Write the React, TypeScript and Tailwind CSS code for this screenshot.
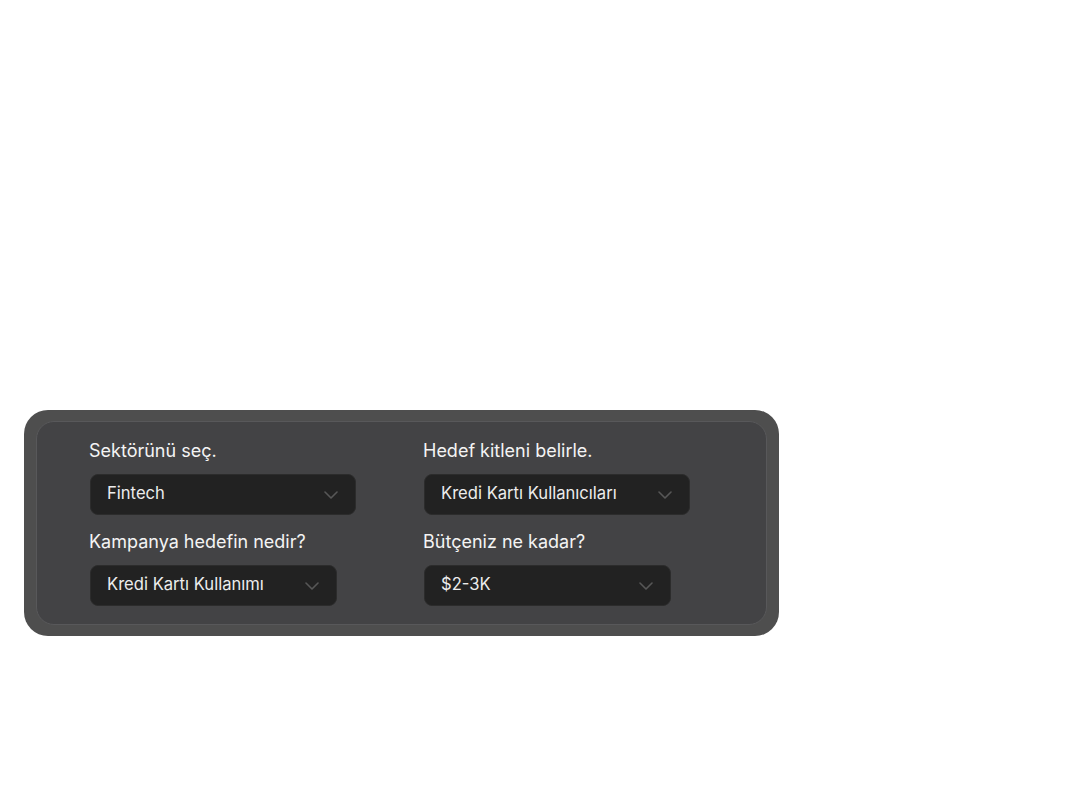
type Field = {
  label: string;
  value: string;
  width: string;
};

const fields: Field[] = [
  { label: 'Sektörünü seç.', value: 'Fintech', width: 'w-[266px]' },
  { label: 'Hedef kitleni belirle.', value: 'Kredi Kartı Kullanıcıları', width: 'w-[266px]' },
  { label: 'Kampanya hedefin nedir?', value: 'Kredi Kartı Kullanımı', width: 'w-[247px]' },
  { label: 'Bütçeniz ne kadar?', value: '$2-3K', width: 'w-[247px]' },
];

function Chevron() {
  return (
    <svg width="14" height="8" viewBox="0 0 14 8" fill="none" className="text-[#575757]">
      <path d="M1 1l6 6 6-6" stroke="currentColor" strokeWidth="1.6" strokeLinecap="round" strokeLinejoin="round" />
    </svg>
  );
}

function SelectBox({ value, width }: { value: string; width: string }) {
  return (
    <div
      className={`${width} h-[41px] flex items-center justify-between rounded-[8px] bg-[#222222] border border-[#2c2c2c] pl-4 pr-[17px]`}
    >
      <span className="text-[16.6px] text-[#ececec] leading-none -mt-[2px]">{value}</span>
      <Chevron />
    </div>
  );
}

export default function App() {
  return (
    <div className="min-h-screen w-full bg-white font-['Inter',sans-serif]">
      <div className="pt-[410px] pl-6">
        {/* Outer frame */}
        <div className="w-[755px] h-[226px] rounded-[24px] bg-[#4e4e4e] p-3 pt-[11px]">
          {/* Inner panel */}
          <div className="h-[204px] w-[731px] rounded-[18px] bg-[#434345] border border-[#58585a] pl-[53px] pt-[17px]">
            <div className="grid grid-cols-[334px_334px] gap-y-[15px]">
              {fields.map((f) => (
                <div key={f.label} className="flex flex-col gap-[11px]">
                  <div className="text-[18px] leading-[24px] font-normal text-[#f4f4f4] -ml-px">
                    {f.label}
                  </div>
                  <SelectBox value={f.value} width={f.width} />
                </div>
              ))}
            </div>
          </div>
        </div>
      </div>
    </div>
  );
}
